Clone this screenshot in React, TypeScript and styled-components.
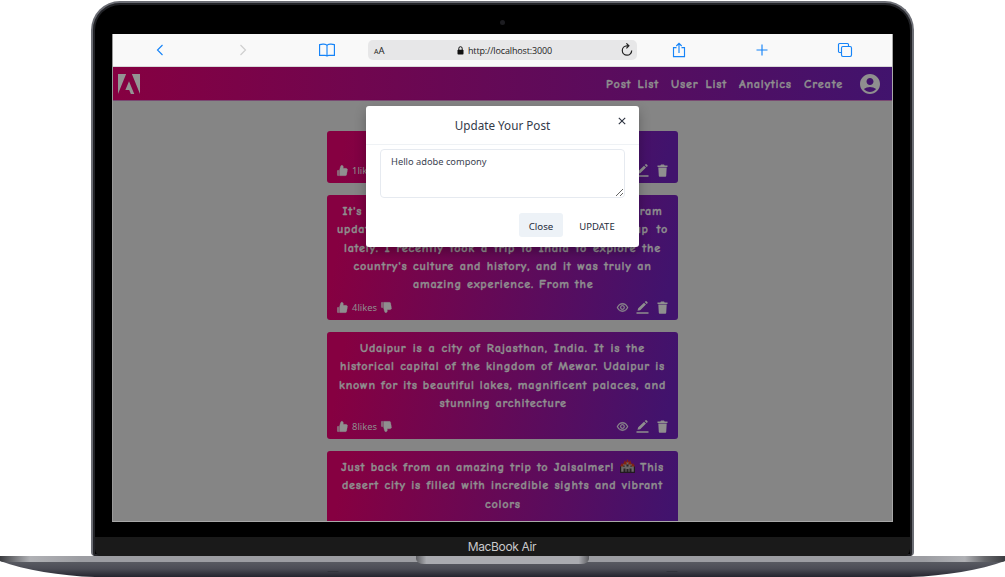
import React from 'react';
import styled, { createGlobalStyle } from 'styled-components';
import { AiFillLike, AiFillDislike, AiOutlineEye } from 'react-icons/ai';
import { MdAccountCircle } from 'react-icons/md';

const Global = createGlobalStyle`
  * { box-sizing: border-box; }
  body { margin: 0; background: #fff; overflow: hidden; font-family: "Noto Sans", "Open Sans", sans-serif; }
`;

const Stage = styled.div`
  width: 1005px;
  height: 577px;
  display: flex;
  flex-direction: column;
  align-items: center;
  padding-top: 1px;
  background: #fff;
`;

const Lid = styled.div`
  width: 823px;
  height: 555px;
  border: 2px solid #6c6e75;
  border-bottom: 0;
  border-radius: 29px 29px 4px 4px;
  background: #000;
  box-shadow: inset 0 0 0 2px #222327;
  overflow: hidden;
  display: flex;
  flex-direction: column;
  align-items: center;
`;

const CameraBar = styled.div`
  height: 31px;
  flex: none;
  display: flex;
  align-items: center;
  padding-top: 8px;
`;

const Camera = styled.div`
  width: 5px;
  height: 5px;
  border-radius: 50%;
  background: #1c1c20;
`;

const Screen = styled.div`
  position: relative;
  width: 781px;
  height: 488px;
  flex: none;
  display: flex;
  flex-direction: column;
  overflow: hidden;
  background: #858585;
  border-bottom: 1px solid #a8a8a8;
  border-left: 1px solid #999;
  border-right: 1px solid #a8a8a8;
`;

const Chin = styled.div`
  margin-top: 15px;
  width: 815px;
  flex: 1;
  background: #1a1a1a;
  border-radius: 0 0 8px 8px;
  color: #c9c9cb;
  font: 12px/20px Inter, sans-serif;
  letter-spacing: -0.35px;
  text-align: center;
  padding-right: 1px;
`;

const BaseArt = styled.svg`
  display: block;
  flex: none;
`;

const BrowserBar = styled.div`
  height: 33px;
  flex: none;
  background: #f9f9f9;
  border-bottom: 1px solid #d9d9d9;
  margin: 0 -1px;
  display: grid;
  grid-template-columns: 96px 69px 91px 269px 83px 83px 83px;
  align-items: center;
  color: #1684f8;
`;

const ToolSlot = styled.div<{ $dim?: boolean; $shift?: number }>`
  display: flex;
  justify-content: center;
  padding-left: ${p => p.$shift ?? 0}px;
  color: ${p => (p.$dim ? '#cfcfcf' : 'inherit')};
  svg { fill: none; stroke: currentColor; stroke-width: 1.15; display: block; }
`;

const Address = styled.div`
  height: 20px;
  border-radius: 5px;
  background: #e7e7e8;
  color: #222;
  display: grid;
  grid-template-columns: 83px 1fr 16px;
  align-items: center;
  padding-left: 6px;
`;

const TextSize = styled.span`
  font: 9.5px "Open Sans", sans-serif;
  small { font-size: 7px; }
`;

const Url = styled.span`
  display: flex;
  align-items: center;
  gap: 4px;
  font: 9px "Open Sans", sans-serif;
  letter-spacing: -0.15px;
`;

const NavBar = styled.nav`
  height: 34px;
  flex: none;
  display: flex;
  align-items: center;
  justify-content: space-between;
  padding: 0 10px 0 5px;
  background: linear-gradient(90deg, #860041, #41136d);
  border-bottom: 1px solid #7a4a72;
  color: #8f8f8f;
`;

const NavLinks = styled.div`
  display: flex;
  align-items: center;
  gap: 12px;
  font: 700 12.2px/20px "Comic Sans MS", "Comic Neue", Lato, sans-serif;
  -webkit-text-stroke: 0.35px currentColor;
`;

const NavItem = styled.span<{ $w: number; $ls: number }>`
  width: ${p => p.$w}px;
  padding-top: 1px;
  white-space: nowrap;
  letter-spacing: ${p => p.$ls}px;
  text-align-last: justify;
`;

const Avatar = styled(MdAccountCircle)`
  width: 24px;
  height: 24px;
  margin-left: 2px;
`;

const Feed = styled.main`
  flex: 1;
  display: flex;
  flex-direction: column;
  align-items: center;
  gap: 12px;
  padding: 30px 0 0 0;
`;

const Card = styled.article<{ $h: number }>`
  width: 351px;
  height: ${p => p.$h}px;
  flex: none;
  border-radius: 3px;
  background: linear-gradient(100deg, #860041 5%, #41136d 96%);
  color: #8f8f8f;
  padding: 7px 10px 3.5px;
  display: flex;
  flex-direction: column;
  justify-content: space-between;
`;

const Message = styled.div`
  display: flex;
  flex-direction: column;
  align-items: center;
  font: 700 12.2px/18.3px "Comic Sans MS", "Comic Neue", Lato, sans-serif;
  -webkit-text-stroke: 0.35px currentColor;
`;

const Line = styled.div<{ $w: number; $ls?: number }>`
  width: ${p => p.$w}px;
  height: 18.3px;
  white-space: nowrap;
  letter-spacing: ${p => p.$ls ?? 0.75}px;
  text-align-last: justify;
  svg { vertical-align: -2px; }
`;

const CardFooter = styled.div`
  display: flex;
  align-items: center;
  justify-content: space-between;
  height: 18px;
  margin-top: auto;
  svg { width: 13px; height: 13px; display: block; }
`;

const Reactions = styled.div`
  display: flex;
  align-items: center;
  gap: 3px;
  margin-left: -1px;
  font-size: 9.4px;
  svg { stroke: currentColor; stroke-width: 22px; }
`;

const Tools = styled.div`
  display: flex;
  gap: 7px;
  margin-right: -1px;
`;

const Eye = styled(AiOutlineEye)`
  stroke: currentColor;
  stroke-width: 28px;
`;

const Modal = styled.section`
  position: absolute;
  left: 253px;
  top: 72px;
  width: 273px;
  height: 141px;
  background: #fff;
  border-radius: 3px;
  box-shadow: 0 5px 12px rgba(0, 0, 0, 0.28);
  color: #333a49;
  display: flex;
  flex-direction: column;
`;

const ModalHead = styled.header`
  height: 39px;
  flex: none;
  display: grid;
  grid-template-columns: 34px 1fr 34px;
  border-bottom: 1px solid #eff2f5;
  text-align: center;
  font-size: 11.7px;
  line-height: 39px;
  svg { margin: 11px 0 0 13px; display: block; }
`;

const Field = styled.textarea`
  width: 245px;
  height: 49px;
  margin: 4px 0 0 14px;
  padding: 4px 10px;
  border: 1px solid #e6eaf0;
  border-radius: 4px;
  background: #fff;
  color: #3b4251;
  font: 9.3px/15px "Noto Sans", sans-serif;
  outline: 0;
  resize: vertical;
`;

const Actions = styled.footer`
  display: flex;
  justify-content: flex-end;
  gap: 6px;
  padding: 15px 14px 0 0;
`;

const Button = styled.button<{ $filled?: boolean }>`
  width: ${p => (p.$filled ? 44 : 56)}px;
  height: 24px;
  padding: 2px 0 0;
  border: 0;
  border-radius: 3px;
  background: ${p => (p.$filled ? '#edf2f7' : 'transparent')};
  color: #252c3b;
  font: ${p => (p.$filled ? 9.7 : 9.5)}px/13px "Noto Sans", sans-serif;
`;

const Pencil = () => (
  <svg viewBox="0 0 13 13" fill="currentColor">
    <path d="M1.500 9.800 2.200 7.300 8 1.700 10 3.600 4.200 9.300zM8.700 1.100 9.600.3Q10-.1 10.500.3L11.500 1.300Q11.900 1.700 11.500 2.200L10.700 3zM.5 11.200h12v1.500H.5z" />
  </svg>
);

const Bin = () => (
  <svg viewBox="0 0 13 13" fill="currentColor">
    <path d="M1.500 1.500H4.300L5 .6H8L8.700 1.500H11.500V3H1.500zM2.300 3.400H10.700L10.200 12Q10.100 12.700 9.400 12.700H3.600Q2.900 12.700 2.800 12z" />
  </svg>
);

const Castle = () => (
  <svg width="15" height="14" viewBox="0 0 15 14">
    <path d="M1 13V7h2V5h3V3h3v2h3v2h2v6z" fill="#6d6766" />
    <path d="M0 7.500l2-3.500 2 3.500zM3 5.500l2-4.500 2 4.500zM6 3.500l1.500-3.500L9 3.500zM8 5.500l2-4.500 2 4.500zM11 7.500l2-3.500 2 3.500z" fill="#84240f" />
    <path d="M3.500 13V9.500h2V13zM9.500 13V9.500h2V13zM6.500 13v-3h2v3zM6.500 5.500h2v2h-2zM3.500 6.500h1v1.500h-1zM10.500 6.500h1v1.500h-1z" fill="#292326" />
    <path d="M0 13.300h15M.6 13V7.500M14.400 13V7.500" stroke="#211a20" strokeWidth="1.2" fill="none" />
  </svg>
);

type LineData = { text: React.ReactNode; w: number; ls?: number };
type Post = { h: number; likes?: number; lines: LineData[] };

const posts: Post[] = [
  { h: 52, likes: 1, lines: [] },
  {
    h: 125,
    likes: 4,
    lines: [
      { text: "It's been a while since my last post on Instagram", w: 320 },
      { text: "updates, so here is what I have been getting up to", w: 331 },
      { text: 'lately. I recently took a trip to India to explore the', w: 317 },
      { text: "country's culture and history, and it was truly an", w: 298 },
      { text: 'amazing experience. From the', w: 179 },
    ],
  },
  {
    h: 107,
    likes: 8,
    lines: [
      { text: 'Udaipur is a city of Rajasthan, India. It is the', w: 285 },
      { text: 'historical capital of the kingdom of Mewar. Udaipur is', w: 325 },
      { text: 'known for its beautiful lakes, magnificent palaces, and', w: 327 },
      { text: 'stunning architecture', w: 126 },
    ],
  },
  {
    h: 107,
    lines: [
      { text: <>Just back from an amazing trip to Jaisalmer! <Castle /> This</>, w: 323 },
      { text: 'desert city is filled with incredible sights and vibrant', w: 321 },
      { text: 'colors', w: 35 },
    ],
  },
];

const PostCard = ({ post }: { post: Post }) => (
  <Card $h={post.h}>
    <Message>
      {post.lines.map((l, i) => <Line key={i} $w={l.w} $ls={l.ls}>{l.text}</Line>)}
    </Message>
    {post.likes !== undefined && (
      <CardFooter>
        <Reactions><AiFillLike />{post.likes}likes<AiFillDislike /></Reactions>
        <Tools><Eye /><Pencil /><Bin /></Tools>
      </CardFooter>
    )}
  </Card>
);

const LaptopBase = () => (
  <BaseArt width="1005" height="21" viewBox="0 0 1005 21">
    <defs>
      <linearGradient id="under" x1="0" y1="0" x2="0" y2="1">
        <stop offset="0" stopColor="#5e6067" />
        <stop offset=".55" stopColor="#4b4c55" />
        <stop offset="1" stopColor="#24242e" />
      </linearGradient>
      <linearGradient id="deck">
        <stop offset="0" stopColor="#3b3c40" />
        <stop offset=".02" stopColor="#8b8c90" />
        <stop offset=".03" stopColor="#b0b1b5" />
        <stop offset=".08" stopColor="#9c9da2" />
        <stop offset=".92" stopColor="#9c9da2" />
        <stop offset=".96" stopColor="#b0b1b5" />
        <stop offset=".98" stopColor="#66676b" />
        <stop offset="1" stopColor="#3b3c40" />
      </linearGradient>
      <linearGradient id="notch">
        <stop offset="0" stopColor="#5d5e62" />
        <stop offset=".06" stopColor="#aaabb0" />
        <stop offset=".94" stopColor="#aaabb0" />
        <stop offset="1" stopColor="#5d5e62" />
      </linearGradient>
    </defs>
    <path d="M0 5C25 14 60 20 95 21H910C945 20 980 14 1005 5V3H0z" fill="url(#under)" />
    <path d="M0 0H1005V5L1002 6H3L0 5z" fill="url(#deck)" />
    <path d="M416 0H589V3Q588 8 581 8H424Q417 8 416 3z" fill="url(#notch)" />
    <path d="M328 15.5h10M667 15.5h10" stroke="#33343c" strokeLinecap="round" />
  </BaseArt>
);

export default function App() {
  return (
    <>
      <Global />
      <Stage>
        <Lid>
          <CameraBar><Camera /></CameraBar>
          <Screen>
            <BrowserBar>
              <ToolSlot><svg width="8" height="12" viewBox="0 0 8 12"><path d="M6.5 1 1.5 6l5 5" /></svg></ToolSlot>
              <ToolSlot $dim><svg width="8" height="12" viewBox="0 0 8 12"><path d="m1.5 1 5 5-5 5" /></svg></ToolSlot>
              <ToolSlot $shift={8}><svg width="16" height="14" viewBox="0 0 16 14"><path d="M8 2.5C7 .8 3 .8.6 1.6v10.8H6Q7.6 12.4 8 13Q8.400 12.4 10 12.400h5.400V1.600C13 .8 9 .8 8 2.500V13" /></svg></ToolSlot>
              <Address>
                <TextSize><small>A</small>A</TextSize>
                <Url>
                  <svg width="7" height="9" viewBox="0 0 7 9"><rect x=".5" y="3.800" width="6" height="4.700" rx=".8" fill="#111" /><path d="M1.800 4V2.400a1.700 1.700 0 0 1 3.400 0V4" fill="none" stroke="#111" /></svg>
                  http://localhost:3000
                </Url>
                <svg width="13" height="14" viewBox="0 0 13 14" fill="none" stroke="#222" strokeWidth="1.2"><path d="M7.500 2.800H6A4.700 4.700 0 1 0 10.700 7.500M5.400.4 7.900 2.800 5.400 5.300" /></svg>
              </Address>
              <ToolSlot><svg width="14" height="16" viewBox="0 0 14 16"><path d="M4.500 5.600H1.500v9h11v-9h-3M7 11V1.300M4.300 4 7 1.300 9.700 4" /></svg></ToolSlot>
              <ToolSlot><svg width="12" height="12" viewBox="0 0 12 12"><path d="M6 .5v11M.5 6h11" /></svg></ToolSlot>
              <ToolSlot><svg width="16" height="16" viewBox="0 0 16 16"><path d="M4 10.500H2.500a1 1 0 0 1-1-1v-7a1 1 0 0 1 1-1h8a1 1 0 0 1 1 1V4" /><rect x="4.500" y="4.500" width="10" height="10" rx="1.400" /></svg></ToolSlot>
            </BrowserBar>
            <NavBar>
              <svg width="22" height="20" viewBox="0 0 23 20" preserveAspectRatio="none" fill="#949494"><path d="M0 0h8.500L0 20zM14.500 0H23v20zM11.500 7.300 17 20h-3.600l-1.700-4H7.700z" /></svg>
              <NavLinks>
                <NavItem $w={53} $ls={0.8}>Post List</NavItem>
                <NavItem $w={56} $ls={0.8}>User List</NavItem>
                <NavItem $w={53} $ls={0.75}>Analytics</NavItem>
                <NavItem $w={40} $ls={0.9}>Create</NavItem>
                <Avatar />
              </NavLinks>
            </NavBar>
            <Feed>{posts.map((p, i) => <PostCard key={i} post={p} />)}</Feed>
            <Modal>
              <ModalHead>
                <i />
                <span>Update Your Post</span>
                <svg width="8" height="8" viewBox="0 0 8 8" stroke="#2d3340" strokeWidth="1.1"><path d="m.8.8 6.400 6.400m0-6.400L.8 7.200" /></svg>
              </ModalHead>
              <Field defaultValue="Hello adobe compony" spellCheck={false} />
              <Actions>
                <Button $filled>Close</Button>
                <Button>UPDATE</Button>
              </Actions>
            </Modal>
          </Screen>
          <Chin>MacBook Air</Chin>
        </Lid>
        <LaptopBase />
      </Stage>
    </>
  );
}
